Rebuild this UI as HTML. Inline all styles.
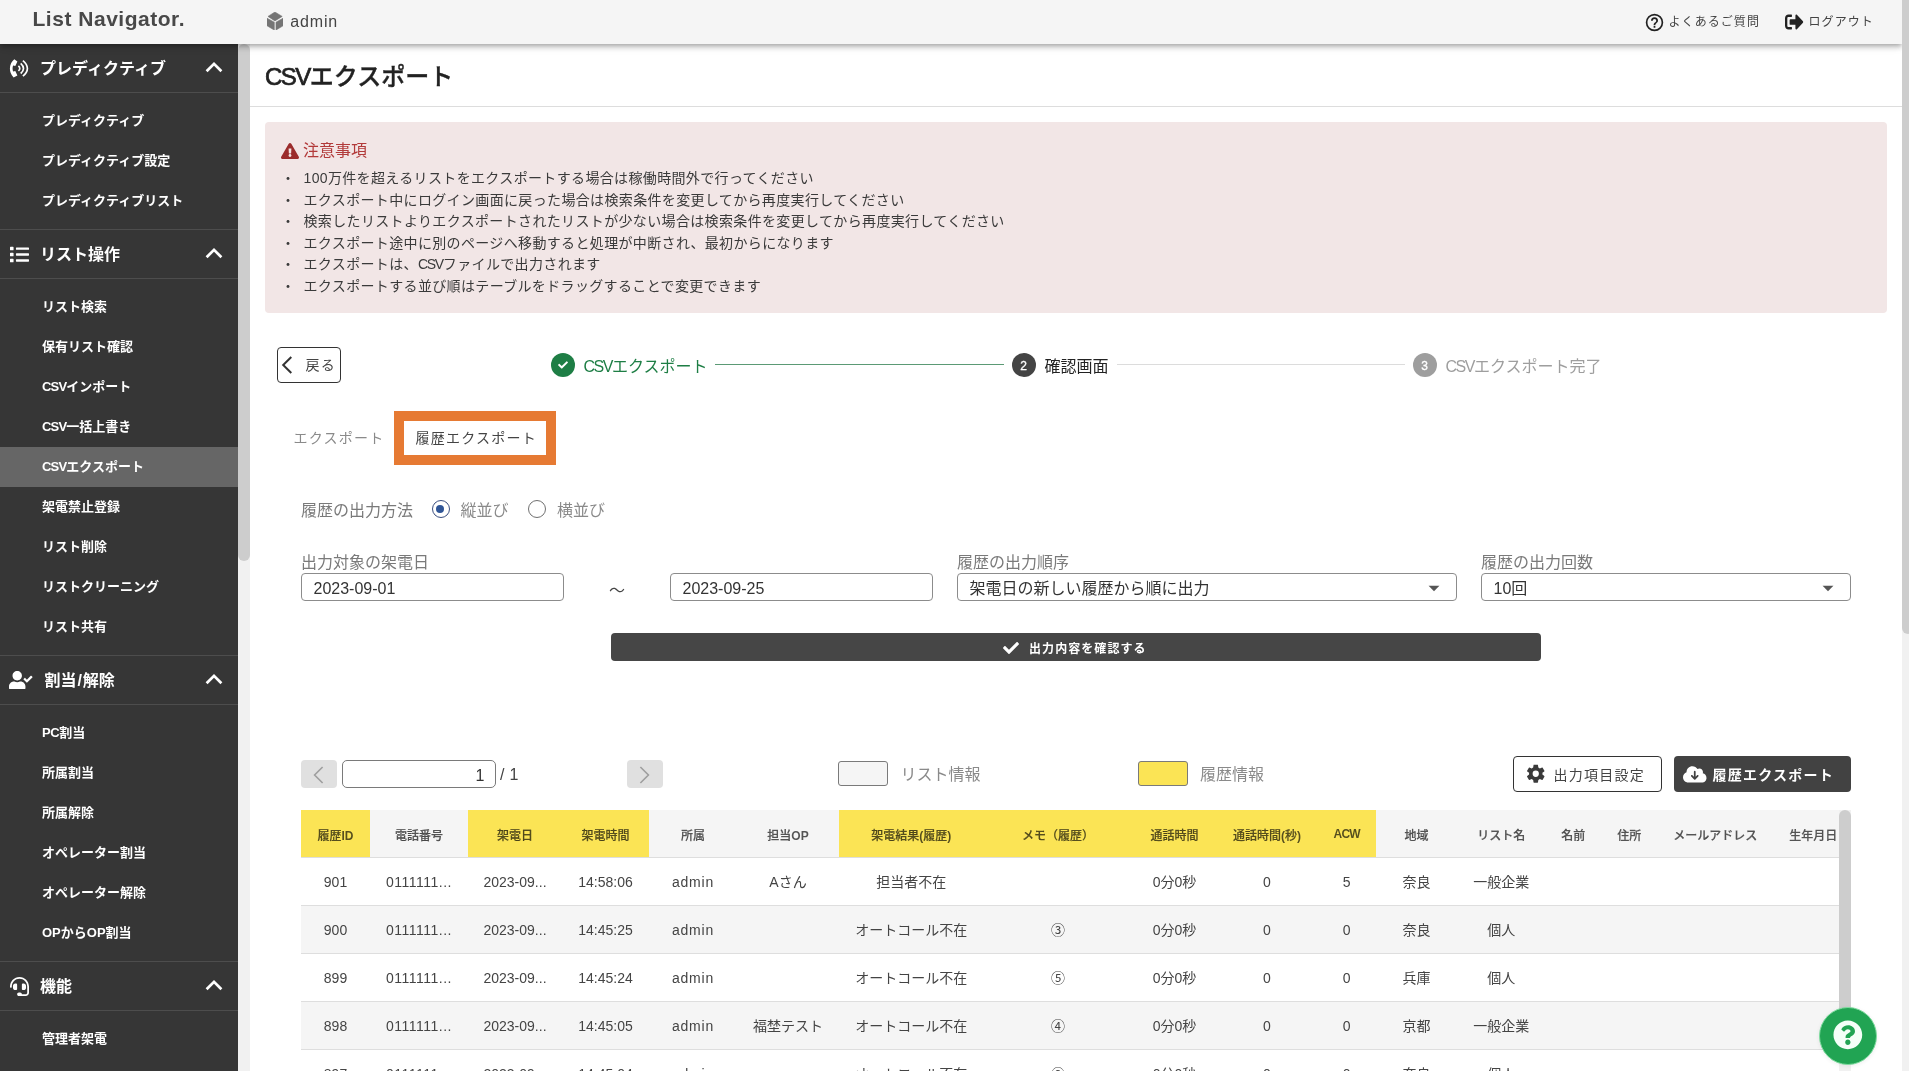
<!DOCTYPE html>
<html lang="ja">
<head>
<meta charset="utf-8">
<title>CSVエクスポート | List Navigator.</title>
<style>
*{box-sizing:border-box;margin:0;padding:0}
html,body{width:1909px;height:1071px;overflow:hidden;background:#fff}
body{font-family:"Liberation Sans","Noto Sans CJK JP",sans-serif;font-size:14px;color:#444;position:relative;-webkit-font-smoothing:antialiased}
svg{display:block}
ul{list-style:none}

/* ---------- top bar ---------- */
#topbar{position:absolute;left:0;top:0;width:1902px;height:44px;background:#f5f5f5;z-index:30;box-shadow:0 2px 4px -1px rgba(0,0,0,.2),0 4px 5px 0 rgba(0,0,0,.14),0 1px 10px 0 rgba(0,0,0,.12)}
#logo{position:absolute;left:32.500px;top:4px;font-size:21px;line-height:30px;font-weight:700;color:#484848;letter-spacing:.52px;white-space:nowrap}
#tenant{position:absolute;left:266px;top:0;height:44px;display:flex;align-items:center;color:#444;font-size:16px}
#tenant svg{width:16.200px;height:18.200px;margin-right:8px;fill:#757575;position:relative;top:-1px;left:.8px}
#tenant span{position:relative;top:-.5px;letter-spacing:.87px}
.toplink{position:absolute;top:0;height:44px;display:flex;align-items:center;font-size:12px;letter-spacing:1.07px;color:#444;white-space:nowrap}
.toplink svg{fill:#222}

/* ---------- sidebar ---------- */
#side{position:absolute;left:0;top:44px;width:238px;height:1027px;background:#363636;color:#fff;overflow:hidden;z-index:10}
#sidescroll{position:absolute;left:238px;top:44px;width:12px;height:1027px;background:#f1f1f1;z-index:10}
#sidescroll i{position:absolute;left:0;top:0;width:12px;height:517px;background:#cdcdcd;border-radius:6px}
.grp-h{height:48px;border-bottom:1px solid #4d4d4d;display:flex;align-items:center;position:relative;font-weight:700;font-size:16px;height:49px}
.grp-h .ico{position:absolute;left:0;top:0;width:38px;height:48px;display:flex;align-items:center;justify-content:center}
.grp-h .ico svg{fill:#fff}
.grp-h .lbl{position:absolute;left:40px;top:0;line-height:50px;white-space:nowrap}
.grp-h .chev{position:absolute;left:205px;top:16.500px;width:18px;height:12px}
.grp-h .chev svg{width:18px;height:12px;fill:none;stroke:#fff;stroke-width:2.7}
.grp-b{padding:8px 0;border-bottom:1px solid #4d4d4d}
.grp-b li{height:40px;line-height:40px;padding-left:42px;font-size:13px;font-weight:700;white-space:nowrap}
.grp-b li.on{background:#666}
.grp-h i{font-style:normal;padding:0 .9px}
.grp-b li b{letter-spacing:-.8px}
.grp-b li b.p{letter-spacing:-.43px}

/* ---------- main ---------- */
#main{position:absolute;left:0;top:0;width:1902px;height:1071px;background:#fff;overflow:hidden}
#main>*{position:absolute}
#main,#side,#topbar{will-change:transform}
#pagescroll{position:absolute;left:1902px;top:0;width:7px;height:1071px;background:#f1f1f1;z-index:40}
#pagescroll i{position:absolute;left:0;top:0;width:12px;height:634px;background:#cdcdcd;border-radius:0 0 6px 6px}
h1{left:265px;top:57.500px;font-size:24px;line-height:38px;font-weight:500;color:#222;white-space:nowrap;-webkit-text-stroke:.35px #222}
h1 b{font-weight:400;letter-spacing:-1.500px;-webkit-text-stroke:.7px #222}
#hr{left:250px;top:106px;width:1652px;height:1px;background:#ddd}

/* alert */
#alert{left:265px;top:122px;width:1622px;height:191px;background:#f2e6e6;border-radius:4px}
#alert h2{position:absolute;left:16px;top:17px;height:24px;line-height:24px;font-size:16px;font-weight:400;color:#b23a3a;display:flex;align-items:center;white-space:nowrap}
#alert h2 svg{width:18px;height:16px;fill:#9b2c2c;margin-right:4px}
#alert ul{position:absolute;left:16px;top:46px}
#alert li{font-size:14px;letter-spacing:.35px;line-height:21.6px;height:21.6px;color:#3a3a3a;white-space:nowrap;padding-left:22.500px;position:relative}
#alert li:before{content:"・";position:absolute;left:0;top:0}
#alert li b{font-weight:400}
#alert li b.c{letter-spacing:-1.28px}

/* back + stepper */
#back{left:277px;top:347px;width:64px;height:35.600px;border:1px solid #333;border-radius:4px;background:#fff;font-size:14px;color:#444;line-height:33px;white-space:nowrap}
#back svg{position:absolute;left:3px;top:8px;width:12px;height:18px;fill:none;stroke:#333;stroke-width:2}
#back span{position:absolute;left:27.500px;top:1px;letter-spacing:1.25px}
.stp-c{width:24px;height:24px;border-radius:50%;color:#fff;font-size:12px;font-weight:400;line-height:26px;text-align:center;-webkit-text-stroke:.3px #fff}
.stp-c svg{width:10px;height:10px;margin:7.200px 7px;fill:#fff}
.stp-t{font-size:16px;line-height:24px;white-space:nowrap;margin-top:1.500px}
.stp-t b{font-weight:400;letter-spacing:-1.46px}
.stp-l{height:1px}

/* tabs */
.tab{font-size:14px;letter-spacing:1.25px;line-height:24px;white-space:nowrap;margin-top:-.5px}
#frame{left:394px;top:411px;width:162px;height:54px;border:10px solid #e67a33}

/* form */
.flabel{margin-top:.7px;font-size:16px;line-height:24px;color:#7a7a7a;white-space:nowrap}
.radio{width:18px;height:18px;border-radius:50%;border:1.800px solid #707070;background:#fff}
.radio.on{border-color:#3b4f80}
.radio.on:after{content:"";position:absolute;left:3.200px;top:3.200px;width:8px;height:8px;border-radius:50%;background:#2f5597}
.rlabel{margin-top:.7px;font-size:16px;line-height:24px;color:#8a8a8a;white-space:nowrap}
.inp{height:28px;border:1px solid #8c8c8c;border-radius:4px;background:#fff;font-size:16px;line-height:29.800px;color:#333;padding-left:11.500px;white-space:nowrap;top:573px;overflow:hidden}
.inp svg{position:absolute;right:9px;top:1.300px;width:26px;height:26px;fill:#555}
.inp b{font-weight:400}
#confirm{left:611px;top:633px;width:930px;height:28px;background:#464646;border-radius:4px;color:#fff;font-weight:700;font-size:12px;letter-spacing:1.07px;line-height:28px;white-space:nowrap}
#confirm svg{position:absolute;left:391.500px;top:7px;width:16px;height:16px;fill:#fff}
#confirm span{position:absolute;left:418px;top:2.200px}

/* pager / legend / buttons */
.pgbtn{top:760px;width:36px;height:28px;background:#e0e0e0;border-radius:4px}
.pgbtn svg{position:absolute;left:12px;top:5.500px;width:11px;height:18px;fill:none;stroke:#9e9e9e;stroke-width:1.6}
#pginp{left:342px;top:760px;width:154px;height:28px;border:1px solid #7a7a7a;border-radius:5px;background:#fff;text-align:right;padding-right:10.500px;font-size:16px;line-height:29px;color:#333}
#pgtot{left:500px;top:763.400px;font-size:16px;line-height:24px;color:#444;white-space:pre;letter-spacing:.3px}
.sw{top:761px;width:50px;height:25px;border:1px solid #7a7a7a;border-radius:3px}
.lg{top:763.400px;font-size:16px;line-height:24px;color:#8a8a8a;white-space:nowrap}
.btn{top:756px;height:36px;border-radius:4px;font-size:14px;letter-spacing:1.25px;line-height:36px;white-space:nowrap}
#btn-set{left:1513px;width:149px;border:1px solid #333;background:#fff;color:#444;line-height:34px}
#btn-set svg{position:absolute;left:10.800px;top:6.100px;width:21.500px;height:21.500px;fill:#3a3a3a}
#btn-set span{position:absolute;left:39.500px;top:1px}
#btn-exp{left:1674px;width:177px;background:#424242;color:#fff;font-weight:700}
#btn-exp svg{position:absolute;left:9.400px;top:8.900px;width:23.500px;height:18.800px;fill:#fff}
#btn-exp span{position:absolute;left:38.500px;top:.7px}

/* table */
#tblwrap{left:301px;top:810px;width:1538px;height:261px;overflow:hidden}
#tbl{border-collapse:collapse;table-layout:fixed;width:1551.600px}
#tbl th,#tbl td{height:48px;padding:0;text-align:center;white-space:nowrap;overflow:hidden;border-bottom:1px solid #dedede}
#tbl th{font-size:12px;font-weight:500;color:rgba(0,0,0,.66);background:#f5f5f5;height:47.500px;padding-top:1.400px;-webkit-text-stroke:.2px rgba(0,0,0,.6)}
#tbl th.y{background:#fbe455}
#tbl td{font-size:14px;color:#444;height:48.100px}
#tbl tr:nth-child(even) td{background:#f5f5f5}
#tbl i{font-style:normal}
#tbl th i{font-weight:700;-webkit-text-stroke:0}
#tbl td u{text-decoration:none;position:relative;top:-.9px}
#tblscroll{left:1839px;top:810px;width:11.700px;height:261px;background:#f1f1f1}
#tblscroll i{position:absolute;left:0;top:0;width:12px;height:235px;background:#cdcdcd;border-radius:6px}
#fab{left:1818.700px;top:1006.700px;width:58.600px;height:58.600px;border-radius:50%;background:#21a453;border:1px solid #7fdc9f;box-shadow:0 1px 4px rgba(0,0,0,.07);z-index:50}
#fab svg{position:absolute;left:13.800px;top:12.500px;width:29.700px;height:29.700px;fill:#f4fff8}
</style>
</head>
<body>

<header id="topbar">
  <div id="logo">List Navigator.</div>
  <div id="tenant">
    <svg viewBox="0 0 16.2 18.2"><path d="M7.900,0L15.200,4.400L7.900,8.900L1,4.400ZM0,6.200L7.300,10.200V18.100L0,13.700ZM9,10.200L16.200,6.200V13.700L9,18.100Z" stroke-linejoin="round" stroke="#757575" stroke-width=".6"/></svg>
    <span>admin</span>
  </div>
  <div class="toplink" style="left:1643.500px"><svg viewBox="0 0 24 24" width="21" height="21"><path d="M11,18H13V16H11V18M12,2A10,10 0 0,0 2,12A10,10 0 0,0 12,22A10,10 0 0,0 22,12A10,10 0 0,0 12,2M12,20C7.59,20 4,16.41 4,12C4,7.59 7.59,4 12,4C16.41,4 20,7.59 20,12C20,16.41 16.41,20 12,20M12,6A4,4 0 0,0 8,10H10A2,2 0 0,1 12,8A2,2 0 0,1 14,10C14,12 11,11.75 11,15H13C13,12.75 16,12.500 16,10A4,4 0 0,0 12,6Z"/></svg><span style="margin-left:4px;position:relative;top:-1.500px">よくあるご質問</span></div>
  <div class="toplink" style="left:1785px"><svg viewBox="0 0 512 512" width="18.500" height="20" preserveAspectRatio="none"><path d="M497 273L329 441c-15 15-41 4.500-41-17v-96H152c-13.300 0-24-10.700-24-24v-96c0-13.300 10.700-24 24-24h136V88c0-21.400 25.900-32 41-17l168 168c9.300 9.400 9.300 24.600 0 34zM192 436v-40c0-6.600-5.400-12-12-12H96c-17.700 0-32-14.300-32-32V160c0-17.700 14.300-32 32-32h84c6.600 0 12-5.400 12-12V76c0-6.600-5.400-12-12-12H96c-53 0-96 43-96 96v192c0 53 43 96 96 96h84c6.600 0 12-5.400 12-12z"/></svg><span style="margin-left:5px;position:relative;top:-1.500px">ログアウト</span></div>
</header>

<nav id="side">
  <div class="grp-h"><span class="ico"><svg viewBox="0 0 20 19" width="20" height="19"><path d="M5.3,0.200C1.2,3.200 -1.8,11.500 4.6,18.600L8.400,16.400L6.300,11.900L4.100,12.400C3.400,10.300 3.400,8.600 4.100,6.500L6.300,7L8.400,2.400Z"/><path d="M9.400,6.900Q12.200,9.400 9.400,11.900M11.700,4.300Q17.300,9.400 11.700,14.500M13.900,1.600Q22.900,9.400 13.900,17.200" fill="none" stroke="#fff" stroke-width="1.700"/></svg></span><span class="lbl">プレディクティブ</span><span class="chev"><svg viewBox="0 0 18 12"><polyline points="1.6,10.300 9,2.800 16.400,10.300"/></svg></span></div>
  <ul class="grp-b">
    <li>プレディクティブ</li>
    <li>プレディクティブ設定</li>
    <li>プレディクティブリスト</li>
  </ul>
  <div class="grp-h"><span class="ico"><svg viewBox="0 0 512 512" width="19" height="19"><path d="M80 368H16a16 16 0 0 0-16 16v64a16 16 0 0 0 16 16h64a16 16 0 0 0 16-16v-64a16 16 0 0 0-16-16zm0-320H16A16 16 0 0 0 0 64v64a16 16 0 0 0 16 16h64a16 16 0 0 0 16-16V64a16 16 0 0 0-16-16zm0 160H16a16 16 0 0 0-16 16v64a16 16 0 0 0 16 16h64a16 16 0 0 0 16-16v-64a16 16 0 0 0-16-16zm416 176H176a16 16 0 0 0-16 16v32a16 16 0 0 0 16 16h320a16 16 0 0 0 16-16v-32a16 16 0 0 0-16-16zm0-320H176a16 16 0 0 0-16 16v32a16 16 0 0 0 16 16h320a16 16 0 0 0 16-16V80a16 16 0 0 0-16-16zm0 160H176a16 16 0 0 0-16 16v32a16 16 0 0 0 16 16h320a16 16 0 0 0 16-16v-32a16 16 0 0 0-16-16z"/></svg></span><span class="lbl">リスト操作</span><span class="chev"><svg viewBox="0 0 18 12"><polyline points="1.6,10.300 9,2.800 16.400,10.300"/></svg></span></div>
  <ul class="grp-b">
    <li>リスト検索</li>
    <li>保有リスト確認</li>
    <li><b>CSV</b>インポート</li>
    <li><b>CSV</b>一括上書き</li>
    <li class="on"><b>CSV</b>エクスポート</li>
    <li>架電禁止登録</li>
    <li>リスト削除</li>
    <li>リストクリーニング</li>
    <li>リスト共有</li>
  </ul>
  <div class="grp-h"><span class="ico"><svg viewBox="0 0 640 512" width="23.500" height="18.800" style="position:relative;left:2px"><path d="M224 256c70.700 0 128-57.300 128-128S294.700 0 224 0 96 57.300 96 128s57.300 128 128 128zm89.600 32h-16.700c-22.200 10.200-46.900 16-72.900 16s-50.600-5.800-72.900-16h-16.700C60.200 288 0 348.200 0 422.400V464c0 26.500 21.500 48 48 48h352c26.500 0 48-21.500 48-48v-41.600c0-74.200-60.200-134.400-134.400-134.400zm323-128.400l-27.800-28.100c-4.600-4.700-12.100-4.700-16.800-.1l-104.800 104-45.500-45.800c-4.600-4.700-12.100-4.700-16.800-.1l-28.100 27.900c-4.700 4.600-4.700 12.100-.1 16.800l81.700 82.300c4.600 4.700 12.100 4.700 16.800.1l141.300-140.200c4.600-4.700 4.700-12.200.1-16.800z"/></svg></span><span class="lbl" style="left:44.500px">割当<i>/</i>解除</span><span class="chev"><svg viewBox="0 0 18 12"><polyline points="1.6,10.300 9,2.800 16.400,10.300"/></svg></span></div>
  <ul class="grp-b">
    <li><b class="p">PC</b>割当</li>
    <li>所属割当</li>
    <li>所属解除</li>
    <li>オペレーター割当</li>
    <li>オペレーター解除</li>
    <li>OPからOP割当</li>
  </ul>
  <div class="grp-h"><span class="ico"><svg viewBox="0 0 512 512" width="19" height="19"><path d="M192 208c0-17.670-14.330-32-32-32h-16c-35.350 0-64 28.650-64 64v48c0 35.350 28.650 64 64 64h16c17.670 0 32-14.330 32-32V208zm176 144c35.350 0 64-28.650 64-64v-48c0-35.350-28.650-64-64-64h-16c-17.670 0-32 14.330-32 32v112c0 17.670 14.330 32 32 32h16zM256 0C113.180 0 4.580 118.830 0 256v16c0 8.840 7.160 16 16 16h16c8.840 0 16-7.160 16-16v-16c0-114.690 93.310-208 208-208s208 93.310 208 208h-.12c.08 2.430.12 165.720.12 165.720 0 23.350-18.930 42.280-42.280 42.280H320c0-26.510-21.490-48-48-48h-32c-26.510 0-48 21.490-48 48s21.490 48 48 48h181.720c49.860 0 90.280-40.420 90.280-90.280V256C507.420 118.830 398.820 0 256 0z"/></svg></span><span class="lbl">機能</span><span class="chev"><svg viewBox="0 0 18 12"><polyline points="1.6,10.300 9,2.800 16.400,10.300"/></svg></span></div>
  <ul class="grp-b">
    <li>管理者架電</li>
    <li>通話モニタリング</li>
  </ul>
</nav>
<div id="sidescroll"><i></i></div>

<main id="main">
  <h1><b>CSV</b>エクスポート</h1>
  <div id="hr"></div>

  <section id="alert">
    <h2><svg viewBox="0 0 576 512"><path d="M569.517 440.013C587.975 472.007 564.806 512 527.940 512H48.054c-36.937 0-59.999-40.055-41.577-71.987L246.423 23.985c18.467-32.009 64.720-31.951 83.154 0l239.940 416.028zM288 354c-25.405 0-46 20.595-46 46s20.595 46 46 46 46-20.595 46-46-20.595-46-46-46zm-43.673-165.346l7.418 136c.347 6.364 5.609 11.346 11.982 11.346h48.546c6.373 0 11.635-4.982 11.982-11.346l7.418-136c.375-6.874-5.098-12.654-11.982-12.654h-63.383c-6.884 0-12.356 5.780-11.981 12.654z"/></svg>注意事項</h2>
    <ul>
      <li><b>100</b>万件を超えるリストをエクスポートする場合は稼働時間外で行ってください</li>
      <li>エクスポート中にログイン画面に戻った場合は検索条件を変更してから再度実行してください</li>
      <li>検索したリストよりエクスポートされたリストが少ない場合は検索条件を変更してから再度実行してください</li>
      <li>エクスポート途中に別のページへ移動すると処理が中断され、最初からになります</li>
      <li>エクスポートは、<b class="c">CSV</b>ファイルで出力されます</li>
      <li>エクスポートする並び順はテーブルをドラッグすることで変更できます</li>
    </ul>
  </section>

  <div id="back"><svg viewBox="0 0 12 18"><polyline points="10.3,1 2.2,9 10.3,17"/></svg><span>戻る</span></div>

  <div class="stp-c" style="left:551px;top:353px;background:#1e7e45"><svg viewBox="0 0 512 512"><path d="M173.898 439.404l-166.400-166.400c-9.997-9.997-9.997-26.206 0-36.204l36.203-36.204c9.997-9.998 26.207-9.998 36.204 0L192 312.690 432.095 72.596c9.997-9.997 26.207-9.997 36.204 0l36.203 36.204c9.997 9.997 9.997 26.206 0 36.204l-294.400 294.401c-9.998 9.997-26.207 9.997-36.204-.001z"/></svg></div>
  <div class="stp-t" style="left:583.500px;top:353px;color:#1e7e45"><b>CSV</b>エクスポート</div>
  <div class="stp-l" style="left:715px;top:364px;width:289px;background:#5b9a75"></div>
  <div class="stp-c" style="left:1011.500px;top:353px;background:#444">2</div>
  <div class="stp-t" style="left:1044.500px;top:353px;color:#222">確認画面</div>
  <div class="stp-l" style="left:1117px;top:364px;width:288px;background:#dcdcdc"></div>
  <div class="stp-c" style="left:1412.500px;top:353px;background:#9e9e9e">3</div>
  <div class="stp-t" style="left:1445.500px;top:353px;color:#9e9e9e"><b>CSV</b>エクスポート完了</div>

  <div class="tab" style="left:293.500px;top:426px;color:#8a8a8a">エクスポート</div>
  <div id="frame"></div>
  <div class="tab" style="left:415.500px;top:426px;color:#444">履歴エクスポート</div>

  <div class="flabel" style="left:301px;top:498px">履歴の出力方法</div>
  <div class="radio on" style="left:432px;top:500.400px"></div>
  <div class="rlabel" style="left:460.500px;top:498px">縦並び</div>
  <div class="radio" style="left:528px;top:500.400px"></div>
  <div class="rlabel" style="left:557px;top:498px">横並び</div>

  <div class="flabel" style="left:301px;top:550px">出力対象の架電日</div>
  <div class="inp" style="left:301px;width:263px"><b>2023-09-01</b></div>
  <div class="flabel" style="left:609px;top:578px;color:#444">～</div>
  <div class="inp" style="left:670px;width:263px"><b>2023-09-25</b></div>
  <div class="flabel" style="left:957px;top:550px">履歴の出力順序</div>
  <div class="inp" style="left:957px;width:500px">架電日の新しい履歴から順に出力<svg viewBox="0 0 24 24"><path d="M7,10L12,15L17,10H7Z"/></svg></div>
  <div class="flabel" style="left:1481px;top:550px">履歴の出力回数</div>
  <div class="inp" style="left:1481px;width:370px"><b>10</b>回<svg viewBox="0 0 24 24"><path d="M7,10L12,15L17,10H7Z"/></svg></div>

  <div id="confirm"><svg viewBox="0 0 512 512"><path d="M173.898 439.404l-166.400-166.400c-9.997-9.997-9.997-26.206 0-36.204l36.203-36.204c9.997-9.998 26.207-9.998 36.204 0L192 312.690 432.095 72.596c9.997-9.997 26.207-9.997 36.204 0l36.203 36.204c9.997 9.997 9.997 26.206 0 36.204l-294.400 294.401c-9.998 9.997-26.207 9.997-36.204-.001z"/></svg><span>出力内容を確認する</span></div>

  <div class="pgbtn" style="left:301px"><svg viewBox="0 0 11 18"><polyline points="9.6,1 1.6,9 9.6,17"/></svg></div>
  <div id="pginp">1</div>
  <div id="pgtot">/ 1</div>
  <div class="pgbtn" style="left:627px"><svg viewBox="0 0 11 18"><polyline points="1.4,1 9.4,9 1.4,17"/></svg></div>
  <div class="sw" style="left:838px;background:#f5f5f5"></div>
  <div class="lg" style="left:900.500px">リスト情報</div>
  <div class="sw" style="left:1138px;background:#fbe455"></div>
  <div class="lg" style="left:1200px">履歴情報</div>
  <div class="btn" id="btn-set"><svg viewBox="0 0 24 24"><path d="M12,15.5A3.5,3.5 0 0,1 8.5,12A3.5,3.5 0 0,1 12,8.5A3.5,3.5 0 0,1 15.5,12A3.5,3.5 0 0,1 12,15.5M19.43,12.97C19.47,12.65 19.5,12.33 19.5,12C19.5,11.67 19.47,11.34 19.43,11L21.54,9.37C21.73,9.22 21.78,8.95 21.66,8.73L19.66,5.27C19.54,5.05 19.27,4.96 19.05,5.05L16.56,6.05C16.04,5.66 15.5,5.32 14.87,5.07L14.5,2.42C14.46,2.18 14.25,2 14,2H10C9.75,2 9.54,2.18 9.5,2.42L9.13,5.07C8.5,5.32 7.96,5.66 7.44,6.05L4.95,5.05C4.73,4.96 4.46,5.05 4.34,5.27L2.34,8.73C2.21,8.95 2.27,9.22 2.46,9.37L4.57,11C4.53,11.34 4.5,11.67 4.5,12C4.5,12.33 4.53,12.65 4.57,12.97L2.46,14.63C2.27,14.78 2.21,15.05 2.34,15.27L4.34,18.73C4.46,18.95 4.73,19.03 4.95,18.95L7.44,17.94C7.96,18.34 8.5,18.68 9.13,18.93L9.5,21.58C9.54,21.82 9.75,22 10,22H14C14.25,22 14.46,21.82 14.5,21.58L14.87,18.93C15.5,18.67 16.04,18.34 16.56,17.94L19.05,18.95C19.27,19.03 19.54,18.95 19.66,18.73L21.66,15.27C21.78,15.05 21.73,14.78 21.54,14.63L19.43,12.970Z"/></svg><span>出力項目設定</span></div>
  <div class="btn" id="btn-exp"><svg viewBox="0 0 640 512"><path d="M144 480C64.500 480 0 415.500 0 336c0-62.800 40.200-116.200 96.200-135.900c-.1-2.700-.2-5.400-.2-8.100c0-88.400 71.600-160 160-160c59.300 0 111 32.200 138.700 80.200C409.900 102 428.300 96 448 96c53 0 96 43 96 96c0 12.200-2.300 23.800-6.400 34.600C596 238.400 640 290.100 640 352c0 70.700-57.300 128-128 128H144zm79-167l80 80c9.400 9.400 24.600 9.400 33.900 0l80-80c9.400-9.400 9.400-24.600 0-33.900s-24.600-9.400-33.900 0l-39 39V184c0-13.300-10.700-24-24-24s-24 10.700-24 24V318.100l-39-39c-9.400-9.400-24.600-9.400-33.900 0s-9.400 24.600 0 33.900z"/></svg><span>履歴エクスポート</span></div>

  <div id="tblwrap"><table id="tbl"><colgroup><col style="width:69px"><col style="width:98px"><col style="width:94px"><col style="width:87px"><col style="width:88px"><col style="width:102px"><col style="width:144.6px"><col style="width:148.9px"><col style="width:84.1px"><col style="width:100.8px"><col style="width:58.6px"><col style="width:81.3px"><col style="width:88px"><col style="width:56px"><col style="width:56px"><col style="width:116px"><col style="width:80px"></colgroup>
<thead><tr><th class=y>履歴<i>ID</i></th><th>電話番号</th><th class=y>架電日</th><th class=y>架電時間</th><th>所属</th><th>担当<i>OP</i></th><th class=y>架電結果<i>(</i>履歴<i>)</i></th><th class=y>メモ（履歴）</th><th class=y>通話時間</th><th class=y>通話時間<i>(</i>秒<i>)</i></th><th class=y><i style="letter-spacing:-.79px">ACW</i></th><th>地域</th><th>リスト名</th><th>名前</th><th>住所</th><th>メールアドレス</th><th>生年月日</th></tr></thead>
<tbody>
<tr><td>901</td><td style="letter-spacing:.5px">0111111...</td><td>2023-09...</td><td>14:58:06</td><td style="letter-spacing:.75px">admin</td><td><u>Aさん</u></td><td><u>担当者不在</u></td><td></td><td><u>0分0秒</u></td><td>0</td><td>5</td><td><u>奈良</u></td><td><u>一般企業</u></td><td></td><td></td><td></td><td></td></tr>
<tr><td>900</td><td style="letter-spacing:.5px">0111111...</td><td>2023-09...</td><td>14:45:25</td><td style="letter-spacing:.75px">admin</td><td></td><td><u>オートコール不在</u></td><td><u>③</u></td><td><u>0分0秒</u></td><td>0</td><td>0</td><td><u>奈良</u></td><td><u>個人</u></td><td></td><td></td><td></td><td></td></tr>
<tr><td>899</td><td style="letter-spacing:.5px">0111111...</td><td>2023-09...</td><td>14:45:24</td><td style="letter-spacing:.75px">admin</td><td></td><td><u>オートコール不在</u></td><td><u>⑤</u></td><td><u>0分0秒</u></td><td>0</td><td>0</td><td><u>兵庫</u></td><td><u>個人</u></td><td></td><td></td><td></td><td></td></tr>
<tr><td>898</td><td style="letter-spacing:.5px">0111111...</td><td>2023-09...</td><td>14:45:05</td><td style="letter-spacing:.75px">admin</td><td><u>福埜テスト</u></td><td><u>オートコール不在</u></td><td><u>④</u></td><td><u>0分0秒</u></td><td>0</td><td>0</td><td><u>京都</u></td><td><u>一般企業</u></td><td></td><td></td><td></td><td></td></tr>
<tr><td>897</td><td style="letter-spacing:.5px">0111111...</td><td>2023-09...</td><td>14:45:04</td><td style="letter-spacing:.75px">admin</td><td></td><td><u>オートコール不在</u></td><td><u>②</u></td><td><u>0分0秒</u></td><td>0</td><td>0</td><td><u>奈良</u></td><td><u>個人</u></td><td></td><td></td><td></td><td></td></tr>
</tbody></table></div>
  <div id="tblscroll"><i></i></div>
  <div id="fab"><svg viewBox="0 0 512 512"><path d="M504 256c0 136.997-111.043 248-248 248S8 392.997 8 256C8 119.083 119.043 8 256 8s248 111.083 248 248zM262.655 90c-54.497 0-89.255 22.957-116.549 63.758-3.536 5.286-2.353 12.415 2.715 16.258l34.699 26.310c5.205 3.947 12.621 3.008 16.665-2.122 17.864-22.658 30.113-35.797 57.303-35.797 20.429 0 45.698 13.148 45.698 32.958 0 14.976-12.363 22.667-32.534 33.976C247.128 238.528 216 254.941 216 296v4c0 6.627 5.373 12 12 12h56c6.627 0 12-5.373 12-12v-1.333c0-28.462 83.186-29.647 83.186-106.667 0-58.002-60.165-102-116.531-102zM256 338c-25.365 0-46 20.635-46 46 0 25.364 20.635 46 46 46s46-20.636 46-46c0-25.365-20.635-46-46-46z"/></svg></div>
</main>

<div id="pagescroll"><i></i></div>
</body>
</html>
